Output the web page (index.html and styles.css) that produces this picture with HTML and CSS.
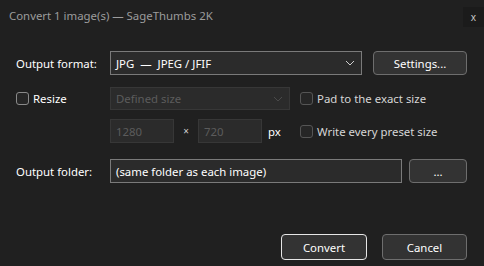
FILE: index.html
```html
<!DOCTYPE html>
<html lang="en">
  <head>
    <meta charset="UTF-8" />
    <title>Convert</title>
    <link rel="stylesheet" href="styles.css">
  </head>
  <body>
    <div class="titlebar">
      <span class="title">Convert 1 image(s) — SageThumbs 2K</span>
      <span class="close">x</span>
    </div>

    <div class="form">
      <div class="row row-format">
        <span class="label">Output format:</span>
        <div class="combo wide">
          <span>JPG &nbsp;—&nbsp; JPEG / JFIF</span>
          <svg class="chev" width="10" height="6" viewBox="0 0 10 6"><path d="M1 1 L5 5 L9 1" fill="none" stroke="#cfcfcf" stroke-width="1"/></svg>
        </div>
        <button class="btn settings">Settings...</button>
      </div>

      <div class="row row-resize">
        <label class="label check-label"><span class="box"></span>Resize</label>
        <div class="combo disabled size">
          <span>Defined size</span>
          <svg class="chev" width="10" height="6" viewBox="0 0 10 6"><path d="M1 1 L5 5 L9 1" fill="none" stroke="#4a4a4a" stroke-width="1"/></svg>
        </div>
        <label class="check-label opt"><span class="box"></span>Pad to the exact size</label>
      </div>

      <div class="row row-dims">
        <span class="label"></span>
        <div class="field disabled dim">1280</div>
        <span class="times">×</span>
        <div class="field disabled dim">720</div>
        <span class="px">px</span>
        <label class="check-label opt"><span class="box"></span>Write every preset size</label>
      </div>

      <div class="row row-folder">
        <span class="label">Output folder:</span>
        <div class="field folder">(same folder as each image)</div>
        <button class="btn browse">...</button>
      </div>

      <div class="actions">
        <button class="btn default">Convert</button>
        <button class="btn cancel">Cancel</button>
      </div>
    </div>
  </body>
</html>
```

FILE: styles.css
```css
* {
  box-sizing: border-box;
}

body {
  margin: 0;
  width: 484px;
  height: 266px;
  background-color: #202020;
  color: #ffffff;
  font-family: "Noto Sans", "Open Sans", sans-serif;
  font-size: 11.4px;
  overflow: hidden;
}

.titlebar {
  display: flex;
  justify-content: space-between;
  align-items: flex-start;
  height: 36px;
  padding-left: 9px;
}

.title {
  margin-top: 8px;
  color: #9c9c9c;
  font-size: 11.4px;
}

.close {
  display: flex;
  align-items: center;
  justify-content: center;
  width: 21px;
  height: 20px;
  margin-top: 7px;
  background-color: #1b1b1b;
  color: #c8c8c8;
  font-size: 10px;
}

.form {
  padding: 15px 17px 0 16px;
}

.row {
  display: flex;
  align-items: center;
}

.label {
  width: 94px;
  flex-shrink: 0;
}

.row-resize {
  margin-top: 12px;
}

.row-dims {
  margin-top: 9px;
}

.row-folder {
  margin-top: 16px;
}

.combo,
.field {
  display: flex;
  align-items: center;
  height: 24px;
  padding: 0 6px 0 5px;
  background-color: #2b2b2b;
  border: 1px solid #7a7a7a;
  color: #ffffff;
}

.combo {
  justify-content: space-between;
}

.wide {
  width: 252px;
}

.size {
  width: 180px;
  height: 23px;
}

.disabled {
  border-color: #373737;
  color: #5c5c5c;
}

.dim {
  width: 64px;
}

.times {
  width: 24px;
  text-align: center;
  color: #cfcfcf;
  font-size: 10px;
}

.px {
  margin-left: 6px;
  width: 22px;
}

.folder {
  width: 292px;
}

.btn {
  height: 24px;
  padding: 0;
  background-color: #333333;
  border: 1px solid #6e6e6e;
  border-radius: 4px;
  color: #ffffff;
  font-family: inherit;
  font-size: 11.4px;
}

.settings {
  width: 94px;
  margin-left: 11px;
}

.browse {
  width: 58px;
  margin-left: 7px;
}

.check-label {
  display: flex;
  align-items: center;
  gap: 4px;
}

.box {
  width: 13px;
  height: 13px;
  border: 1px solid #8a8a8a;
  border-radius: 3px;
  background-color: #262626;
}

.opt {
  margin-left: 10px;
  color: #d6d6d6;
}

.opt .box {
  border-color: #555555;
}

.actions {
  display: flex;
  justify-content: flex-end;
  gap: 15px;
  margin-top: 51px;
}

.actions .btn {
  height: 26px;
}

.default {
  width: 86px;
  border-color: #e6e6e6;
}

.cancel {
  width: 85px;
}
```
